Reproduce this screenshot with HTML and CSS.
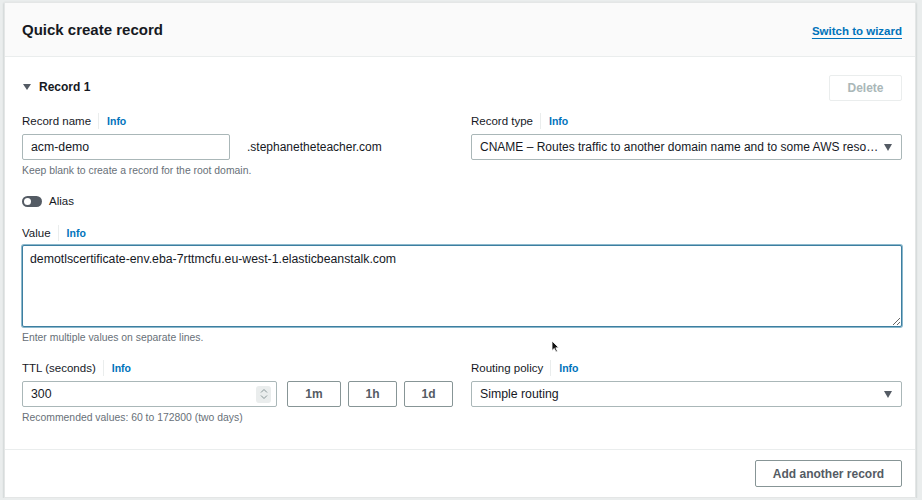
FILE: index.html
```html
<!DOCTYPE html>
<html lang="en">
<head>
    <meta charset="UTF-8">
    <meta name="viewport" content="width=device-width, initial-scale=1.0">
    <title>Quick create record</title>
    <link rel="stylesheet" href="styles.css">
</head>
<body>
    <div class="page">
        <div class="card">
            <div class="card-header">
                <h2 class="title">Quick create record</h2>
                <a class="link" href="#">Switch to wizard</a>
            </div>

            <div class="card-body">
                <div class="record-head">
                    <div class="record-title"><span class="caret"></span>Record 1</div>
                    <button class="btn btn-disabled">Delete</button>
                </div>

                <div class="grid">
                    <div class="field">
                        <div class="label">Record name <span class="info">Info</span></div>
                        <div class="name-row">
                            <div class="input name-input">acm-demo</div>
                            <span class="suffix">.stephanetheteacher.com</span>
                        </div>
                        <div class="hint">Keep blank to create a record for the root domain.</div>
                    </div>
                    <div class="field">
                        <div class="label">Record type <span class="info">Info</span></div>
                        <div class="input select">
                            <span class="select-text long">CNAME – Routes traffic to another domain name and to some AWS reso…</span>
                            <span class="arrow"></span>
                        </div>
                    </div>
                </div>

                <div class="toggle-row">
                    <span class="toggle"><span class="knob"></span></span>
                    <span>Alias</span>
                </div>

                <div class="field value-field">
                    <div class="label">Value <span class="info">Info</span></div>
                    <textarea class="textarea">demotlscertificate-env.eba-7rttmcfu.eu-west-1.elasticbeanstalk.com</textarea>
                    <div class="hint">Enter multiple values on separate lines.</div>
                </div>

                <div class="grid ttl-grid">
                    <div class="field">
                        <div class="label">TTL (seconds) <span class="info">Info</span></div>
                        <div class="ttl-row">
                            <div class="input ttl-input">
                                <span>300</span>
                                <span class="spinner">
                                    <svg width="8" height="12" viewBox="0 0 8 12">
                                        <path d="M1 4.5 L4 1.5 L7 4.5 M1 7.5 L4 10.5 L7 7.5" fill="none" stroke="#879596" stroke-width="1"/>
                                    </svg>
                                </span>
                            </div>
                            <button class="btn btn-small btn-first">1m</button>
                            <button class="btn btn-small">1h</button>
                            <button class="btn btn-small">1d</button>
                        </div>
                        <div class="hint">Recommended values: 60 to 172800 (two days)</div>
                    </div>
                    <div class="field">
                        <div class="label">Routing policy <span class="info">Info</span></div>
                        <div class="input select">
                            <span class="select-text">Simple routing</span>
                            <span class="arrow"></span>
                        </div>
                    </div>
                </div>

                <!-- mouse pointer from the screenshot -->
                <svg class="pointer" width="9" height="13" viewBox="0 0 9 13">
                    <path d="M1 1 L1 10.5 L3.3 8.4 L5 12 L6.4 11.3 L4.8 7.8 L7.8 7.8 Z" fill="#111" stroke="#fff" stroke-width="0.8"/>
                </svg>
            </div>

            <div class="card-footer">
                <button class="btn btn-add">Add another record</button>
            </div>
        </div>
    </div>
</body>
</html>
```

FILE: styles.css
```css
body {
    margin: 0;
    background-color: #eaeded;
    color: #16191f;
    font-family: 'Liberation Sans', Arial, sans-serif;
}

.page {
    padding: 2px 6px 0 4px;
}

.card {
    background-color: #fff;
    border: 1px solid #e4e6e6;
    box-shadow: 0 1px 2px rgba(0, 28, 36, 0.25);
}

.card-header {
    display: flex;
    align-items: center;
    justify-content: space-between;
    height: 54px;
    padding: 0 13px 0 17px;
    background-color: #fafafa;
    border-bottom: 1px solid #eaeded;
    box-sizing: border-box;
}

.title {
    margin: 0 0 1px;
    font-size: 15px;
    font-weight: bold;
}

.link {
    margin-top: 3px;
    color: #0073bb;
    font-size: 11.5px;
    font-weight: bold;
    text-decoration: underline;
    text-underline-offset: 3px;
}

.card-body {
    position: relative;
    padding: 18px 13px 24px 17px;
}

.record-head {
    display: flex;
    align-items: center;
    justify-content: space-between;
    height: 26px;
}

.record-title {
    display: flex;
    align-items: center;
    margin-bottom: 3px;
    font-size: 12px;
    font-weight: bold;
}

.caret {
    width: 0;
    height: 0;
    margin: 0 8px 0 1px;
    border-left: 4px solid transparent;
    border-right: 4px solid transparent;
    border-top: 6px solid #545b64;
}

.btn {
    height: 26px;
    padding: 0 14px;
    background-color: #fff;
    border: 1px solid #879596;
    border-radius: 2px;
    color: #545b64;
    font-family: 'Liberation Sans', Arial, sans-serif;
    font-size: 12px;
    font-weight: bold;
    box-sizing: border-box;
}

.btn-disabled {
    width: 73px;
    border-color: #eaeded;
    color: #aab7b8;
}

.grid {
    display: grid;
    grid-template-columns: minmax(0, 1fr) minmax(0, 1fr);
    column-gap: 18px;
    margin-top: 12px;
}

.ttl-grid {
    margin-top: 15px;
}

.label {
    display: flex;
    align-items: center;
    height: 16px;
    margin-bottom: 5px;
    font-size: 11.5px;
}

.info {
    margin-left: 7px;
    padding-left: 8px;
    border-left: 1px solid #eaeded;
    color: #0073bb;
    font-size: 10.5px;
    font-weight: bold;
    line-height: 16px;
}

.input {
    display: flex;
    align-items: center;
    height: 26px;
    padding: 0 8px;
    border: 1px solid #aab7b8;
    border-radius: 2px;
    font-size: 12.3px;
    box-sizing: border-box;
}

.name-row {
    display: flex;
    align-items: center;
}

.name-input {
    width: 208px;
}

.suffix {
    margin-left: 17px;
    font-size: 12px;
}

.select {
    justify-content: space-between;
}

.select-text {
    white-space: nowrap;
}

.select-text.long {
    font-size: 12px;
}

.arrow {
    flex: none;
    width: 0;
    height: 0;
    margin: 0 1px 0 6px;
    border-left: 4.5px solid transparent;
    border-right: 4.5px solid transparent;
    border-top: 7px solid #545b64;
}

.hint {
    margin-top: 4px;
    color: #687078;
    font-size: 10.4px;
    line-height: 14px;
}

.toggle-row {
    display: flex;
    align-items: center;
    height: 20px;
    margin-top: 13px;
    font-size: 11.5px;
}

.toggle {
    display: flex;
    align-items: center;
    width: 20px;
    height: 11px;
    margin-right: 7px;
    padding: 0 2px;
    background-color: #545b64;
    border-radius: 6px;
    box-sizing: border-box;
}

.knob {
    width: 7px;
    height: 7px;
    background-color: #fff;
    border-radius: 50%;
}

.value-field {
    margin-top: 14px;
}

.value-field .label {
    margin-bottom: 4px;
}

.textarea {
    display: block;
    width: 100%;
    height: 82px;
    padding: 6px 7px;
    border: 1px solid #3d7ea0;
    border-radius: 2px;
    box-shadow: 0 0 0 1px #8bb8cc;
    outline: none;
    color: #16191f;
    font-family: 'Liberation Sans', Arial, sans-serif;
    font-size: 12.3px;
    box-sizing: border-box;
}

.ttl-row {
    display: flex;
    align-items: center;
    gap: 7px;
}

.ttl-input {
    justify-content: space-between;
    width: 255px;
    padding-right: 5px;
}

.spinner {
    display: flex;
    align-items: center;
    justify-content: center;
    width: 15px;
    height: 17px;
    background-color: #eaeded;
    border-radius: 3px;
}

.btn-small {
    width: 49px;
    padding: 0;
}

.btn-first {
    width: 54px;
    margin-left: 3px;
}

.pointer {
    position: absolute;
    left: 546px;
    top: 283px;
}

.card-footer {
    display: flex;
    justify-content: flex-end;
    padding: 10px 13px 10px 17px;
    border-top: 1px solid #eaeded;
}

.btn-add {
    width: 147px;
    height: 27px;
}
```
